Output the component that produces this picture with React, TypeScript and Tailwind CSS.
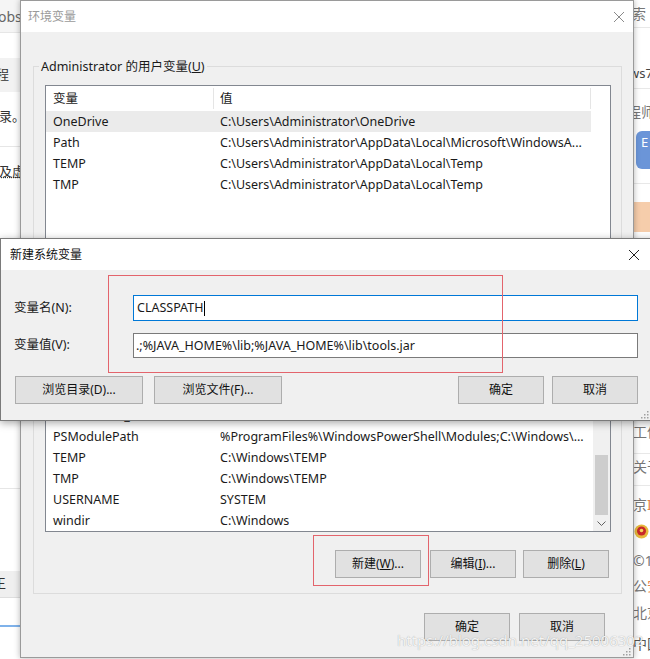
import React from "react";

const FONT = "font-['Noto_Sans','Noto_Sans_CJK_SC',sans-serif]";

function CloseX({ color }: { color: string }) {
  return (
    <svg width="12" height="12" viewBox="0 0 12 12">
      <path d="M1 1 L11 11 M11 1 L1 11" stroke={color} strokeWidth="1" fill="none" />
    </svg>
  );
}

function Grip() {
  const dots = [
    [6, 0],
    [6, 3],
    [3, 3],
    [6, 6],
    [3, 6],
    [0, 6],
  ];
  return (
    <svg width="8" height="8" viewBox="0 0 8 8">
      {dots.map(([x, y], i) => (
        <rect key={i} x={x} y={y} width="1.5" height="1.5" fill="#a0a0a0" />
      ))}
    </svg>
  );
}

function Btn({ children, className }: { children: React.ReactNode; className: string }) {
  return (
    <div
      className={
        "flex items-center justify-center bg-[#e1e1e1] border border-[#adadad] text-[12px] text-[#111] whitespace-nowrap " +
        className
      }
    >
      {children}
    </div>
  );
}

type Row = { k: string; v: string; sel?: boolean };

const userRows: Row[] = [
  { k: "OneDrive", v: "C:\\Users\\Administrator\\OneDrive", sel: true },
  { k: "Path", v: "C:\\Users\\Administrator\\AppData\\Local\\Microsoft\\WindowsA..." },
  { k: "TEMP", v: "C:\\Users\\Administrator\\AppData\\Local\\Temp" },
  { k: "TMP", v: "C:\\Users\\Administrator\\AppData\\Local\\Temp" },
];

const sysRows: Row[] = [
  { k: "PROCESSOR_IDENTIFIER", v: "Intel64 Family 6 Model 158 Stepping 10, GenuineIntel" },
  { k: "PROCESSOR_LEVEL", v: "6" },
  { k: "PROCESSOR_REVISION", v: "9e0a" },
  { k: "PSModulePath", v: "%ProgramFiles%\\WindowsPowerShell\\Modules;C:\\Windows\\..." },
  { k: "TEMP", v: "C:\\Windows\\TEMP" },
  { k: "TMP", v: "C:\\Windows\\TEMP" },
  { k: "USERNAME", v: "SYSTEM" },
  { k: "windir", v: "C:\\Windows" },
];

function ListRow({ r }: { r: Row }) {
  return (
    <div
      className={
        "flex h-[21px] items-center pt-[2px] text-[12.5px] text-[#1a1a1a] whitespace-nowrap " +
        (r.sel ? "bg-[#ebebeb]" : "")
      }
    >
      <div className="w-[168px] shrink-0 pl-[7px] overflow-hidden">{r.k}</div>
      <div className="flex-1 pl-[6px] overflow-hidden">{r.v}</div>
    </div>
  );
}

function ListHeader() {
  return (
    <div className="flex h-[25px] items-center text-[12.5px] text-[#1a1a1a] bg-white">
      <div className="w-[168px] shrink-0 pl-[7px] h-[21px] pt-[2px] flex items-center border-r border-[#e5e5e5]">变量</div>
      <div className="flex-1 pl-[6px] h-[21px] pt-[2px] flex items-center border-r border-[#e5e5e5]">值</div>
    </div>
  );
}

function LeftStrip() {
  return (
    <div className="w-[20px] shrink-0 flex flex-col overflow-hidden text-[13px] text-[#333]">
      <div className="h-[33px] bg-[#f5f5f5] border-b border-[#e6e6e6] flex items-center text-[#666] text-[14px] whitespace-nowrap">
        <span className="-ml-[2px]">obs</span>
      </div>
      <div className="h-[25px] bg-white" />
      <div className="h-[34px] bg-[#f2f2f2] flex items-center whitespace-nowrap">
        <span className="-ml-[4px]">程</span>
      </div>
      <div className="h-[55px] bg-white border-b border-[#e6e6e6] pt-[15px] leading-[18px] whitespace-nowrap">
        <span className="-ml-[1px]">录。</span>
      </div>
      <div className="h-[90px] bg-white pt-[15px] leading-[18px] whitespace-nowrap">
        <span className="-ml-[1px] underline decoration-dotted">及虚</span>
      </div>
      <div className="h-[252px] bg-white border-b border-[#e6e6e6]" />
      <div className="h-[82px] bg-white" />
      <div className="h-[27px] bg-[#efefef] border-b border-[#dedede] flex items-center whitespace-nowrap">
        <span className="-ml-[7px]">王</span>
      </div>
      <div className="h-[27px] bg-white" />
      <div className="h-[2px] bg-[#7fb2ea]" />
      <div className="flex-1 bg-white" />
    </div>
  );
}

function RightStrip() {
  return (
    <div className="w-[17px] shrink-0 flex flex-col overflow-hidden text-[14px] text-[#777] whitespace-nowrap">
      <div className="h-[28px] border-b border-[#e8e8e8] flex items-center">
        <span className="-ml-[1px]">索</span>
      </div>
      <div className="h-[32px]" />
      <div className="h-[29px] border-b border-[#e8e8e8] flex items-center text-[#444] text-[13px]">
        <span className="-ml-[4px]">ws7</span>
      </div>
      <div className="h-[42px] flex items-center pt-[2px]">
        <span className="-ml-[6px]">程师</span>
      </div>
      <div className="h-[38px] ml-[3px] rounded-l-[6px] bg-[#6b95d8] text-white text-[13px] pl-[5px] pt-[2px] leading-[18px]">
        E
      </div>
      <div className="h-[15px] border-b border-[#e8e8e8]" />
      <div className="h-[18px]" />
      <div className="h-[30px] ml-[1px] bg-[#f6cdab]" />
      <div className="h-[189px]" />
      <div className="h-[33px] border-b border-[#e8e8e8] pt-[2px] leading-[18px]">
        <span>工信部</span>
      </div>
      <div className="h-[32px] border-b border-[#e8e8e8] pt-[4px] leading-[18px]">
        <span>关于</span>
      </div>
      <div className="h-[34px] pt-[10px] leading-[18px]">
        <span>京</span>
        <span className="text-[#e8814a]">I</span>
      </div>
      <div className="h-[22px] flex items-center pl-[1px]">
        <svg width="15" height="15" viewBox="0 0 15 15">
          <circle cx="7.5" cy="7.5" r="7" fill="#e7b93c" />
          <circle cx="7.5" cy="7" r="4.5" fill="#c8282a" />
          <circle cx="7.5" cy="6.5" r="1.8" fill="#f4d35e" />
        </svg>
      </div>
      <div className="h-[36px] flex items-center">©1</div>
      <div className="h-[14px] flex items-center">
        <span>公</span>
        <span className="text-[#e8814a]">安</span>
      </div>
      <div className="h-[40px] flex items-center">北京</div>
      <div className="h-[22px] flex items-center text-[#555]">中国</div>
      <div className="flex-1" />
    </div>
  );
}

export default function App() {
  return (
    <div className={"relative w-[650px] h-[659px] overflow-hidden bg-white " + FONT}>
      {/* background web page */}
      <div className="flex h-full">
        <LeftStrip />
        <div className="flex-1 bg-white" />
        <RightStrip />
      </div>

      {/* 环境变量 window */}
      <div className="absolute left-[20px] top-0 w-[614px] h-[658px] flex flex-col border border-[#9a9a9a] shadow-[0_0_6px_rgba(0,0,0,0.3)] bg-[#f0f0f0]">
        <div className="h-[31px] shrink-0 bg-white flex items-center justify-between pl-[7px] pr-[8px]">
          <span className="text-[12px] text-[#9a9a9a]">环境变量</span>
          <CloseX color="#8a8a8a" />
        </div>
        <div className="flex-1 flex flex-col pl-[12px] pr-[11px] relative">
          {/* user variables group */}
          <div className="mt-[34px] border border-[#dcdcdc] pb-[9px]">
            <div className="-mt-[9px] ml-[5px] w-fit bg-[#f0f0f0] px-[2px] leading-[18px] text-[12.5px] text-[#1a1a1a]">
              Administrator 的用户变量(<span className="underline">U</span>)
            </div>
            <div className="mt-[9px] ml-[11px] mr-[10px] h-[170px] border border-[#828790] bg-white flex">
              <div className="w-[545px] flex flex-col">
                <ListHeader />
                {userRows.map((r, i) => (
                  <ListRow key={i} r={r} />
                ))}
              </div>
            </div>
            <div className="mt-[9px] mr-[10px] flex justify-end gap-[9px]">
              <Btn className="w-[86px] h-[28px]">新建(N)...</Btn>
              <Btn className="w-[86px] h-[28px]">编辑(E)...</Btn>
              <Btn className="w-[86px] h-[28px]">删除(D)</Btn>
            </div>
          </div>

          {/* system variables group */}
          <div className="mt-[16px] border border-[#dcdcdc] pb-[15px]">
            <div className="-mt-[9px] ml-[5px] w-fit bg-[#f0f0f0] px-[2px] leading-[18px] text-[12.5px] text-[#1a1a1a]">
              系统变量(<span className="underline">S</span>)
            </div>
            <div className="mt-[9px] ml-[11px] mr-[10px] h-[195px] border border-[#828790] bg-white flex">
              <div className="flex-1 flex flex-col">
                <ListHeader />
                {sysRows.map((r, i) => (
                  <ListRow key={i} r={r} />
                ))}
              </div>
              <div className="w-[17px] shrink-0 bg-[#f0f0f0] flex flex-col items-center">
                <div className="h-[17px] flex items-center justify-center">
                  <svg width="9" height="5" viewBox="0 0 9 5">
                    <path d="M0.5 4.5 L4.5 0.5 L8.5 4.5" stroke="#606060" fill="none" />
                  </svg>
                </div>
                <div className="flex-1 w-full flex flex-col items-center">
                  <div className="mt-[101px] w-[13px] h-[60px] bg-[#cdcdcd]" />
                </div>
                <div className="h-[17px] flex items-center justify-center">
                  <svg width="9" height="5" viewBox="0 0 9 5">
                    <path d="M0.5 0.5 L4.5 4.5 L8.5 0.5" stroke="#606060" fill="none" />
                  </svg>
                </div>
              </div>
            </div>
            <div className="mt-[18px] mr-[12px] flex justify-end">
              <Btn className="w-[86px] h-[28px]">
                <span>新建(</span>
                <span className="underline">W</span>
                <span>)...</span>
              </Btn>
              <Btn className="ml-[9px] w-[86px] h-[28px]">
                <span>编辑(</span>
                <span className="underline">I</span>
                <span>)...</span>
              </Btn>
              <Btn className="ml-[7px] w-[86px] h-[28px]">
                <span>删除(</span>
                <span className="underline">L</span>
                <span>)</span>
              </Btn>
            </div>
          </div>

          <div className="mt-[19px] mr-[17px] flex justify-end gap-[9px]">
            <Btn className="w-[86px] h-[28px]">确定</Btn>
            <Btn className="w-[86px] h-[28px]">取消</Btn>
          </div>
          <div className="absolute right-[2px] bottom-[1px]">
            <Grip />
          </div>
        </div>
      </div>

      {/* 新建系统变量 window */}
      <div className="absolute left-0 top-[238px] w-[658px] h-[183px] flex flex-col border border-[#7a7a7a] shadow-[0_2px_8px_rgba(0,0,0,0.35)] bg-[#f0f0f0]">
        <div className="h-[31px] shrink-0 bg-white flex items-center justify-between pl-[9px] pr-[17px]">
          <span className="text-[12px] text-[#111]">新建系统变量</span>
          <CloseX color="#222" />
        </div>
        <div className="flex-1 flex flex-col pl-[13px] relative">
          <div className="mt-[25px] flex items-center h-[26px]">
            <div className="w-[119px] text-[12.5px] text-[#1a1a1a]">变量名(N):</div>
            <div className="w-[505px] h-[26px] border border-[#0078d7] bg-white flex items-center pl-[3px] pt-[1px] text-[12.5px] text-[#1a1a1a]">
              CLASSPATH
              <span className="inline-block w-[1px] h-[15px] bg-black ml-[1px]" />
            </div>
          </div>
          <div className="mt-[12px] flex items-center h-[25px]">
            <div className="w-[119px] text-[12.5px] text-[#1a1a1a]">变量值(V):</div>
            <div className="w-[505px] h-[25px] border border-[#7a7a7a] bg-white flex items-center pl-[2px] pt-[1px] text-[12.5px] text-[#1a1a1a] whitespace-nowrap">
              .;%JAVA_HOME%\lib;%JAVA_HOME%\lib\tools.jar
            </div>
          </div>
          <div className="mt-[18px] flex items-center">
            <Btn className="ml-[1px] w-[128px] h-[28px]">浏览目录(D)...</Btn>
            <Btn className="ml-[11px] w-[128px] h-[28px]">浏览文件(F)...</Btn>
            <div className="flex-1" />
            <Btn className="w-[86px] h-[28px]">确定</Btn>
            <Btn className="ml-[8px] mr-[19px] w-[86px] h-[28px]">取消</Btn>
          </div>
          <div className="absolute right-[8px] bottom-[1px]">
            <Grip />
          </div>
        </div>
      </div>

      {/* red annotation boxes */}
      <div className="absolute left-[108px] top-[275px] w-[395px] h-[98px] border-[1.5px] border-[#e3646c]" />
      <div className="absolute left-[313px] top-[535px] w-[116px] h-[51px] border-[1.5px] border-[#e3646c]" />

      {/* watermark */}
      <div className="absolute left-[397px] top-[630px] text-[15px] leading-[20px] text-[#f4f4f4] [text-shadow:0_0_1px_rgba(0,0,0,0.35)] whitespace-nowrap">
        https://blog.csdn.net/qq_25006302
      </div>
    </div>
  );
}
